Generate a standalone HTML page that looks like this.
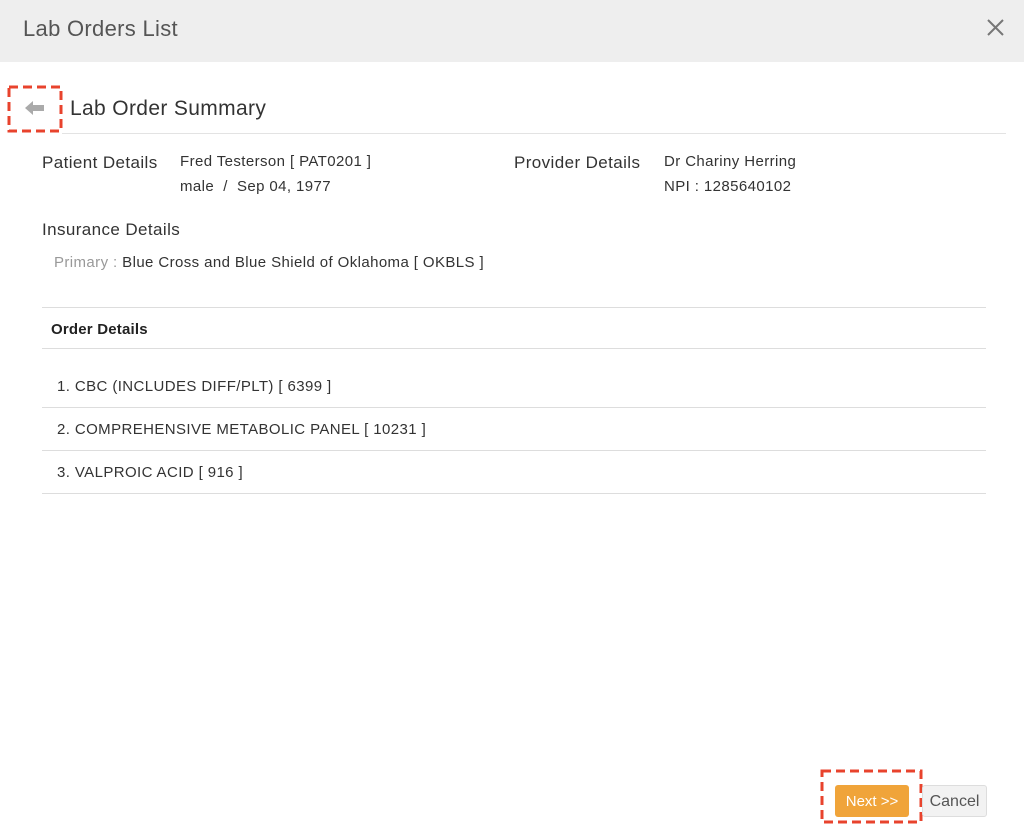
<!DOCTYPE html>
<html><head><style>
*{margin:0;padding:0;box-sizing:border-box}
body{width:1024px;height:827px;background:#fff;font-family:"Liberation Sans",sans-serif;color:#333;position:relative;overflow:hidden}
.a{position:absolute;white-space:nowrap}
.t{letter-spacing:0.4px}
.hl{position:absolute;left:42px;width:944px;height:1px;background:#ddd}
</style></head><body>
<div class="a" style="left:0;top:0;width:1024px;height:62px;background:#eeeeee"></div>
<div class="a" style="left:23px;top:16px;font-size:22px;color:#555;letter-spacing:0.3px">Lab Orders List</div>
<svg class="a" style="left:987px;top:19px" width="17" height="17" viewBox="0 0 17 17"><path d="M1 1L16 16M16 1L1 16" stroke="#777" stroke-width="2"/></svg>
<svg class="a" style="left:7px;top:85px" width="56" height="48"><rect x="2" y="2" width="52" height="44" fill="none" stroke="#e8432d" stroke-width="3" stroke-dasharray="9 5"/></svg>
<svg class="a" style="left:24px;top:100px" width="22" height="16" viewBox="0 0 22 16"><path d="M1 8L9 1V5H20V11H9V15Z" fill="#aaa"/></svg>
<div class="a" style="left:70px;top:97px;font-size:21px;color:#333;letter-spacing:0.35px">Lab Order Summary</div>
<div class="a" style="left:62px;top:133px;width:944px;height:1px;background:#e3e3e3"></div>
<div class="a t" style="left:42px;top:153px;font-size:17px">Patient Details</div>
<div class="a t" style="left:180px;top:149px;font-size:15px;line-height:25px">Fred Testerson [ PAT0201 ]<br>male &nbsp;/ &nbsp;Sep 04, 1977</div>
<div class="a t" style="left:514px;top:153px;font-size:17px">Provider Details</div>
<div class="a t" style="left:664px;top:149px;font-size:15px;line-height:25px">Dr Chariny Herring<br>NPI : 1285640102</div>
<div class="a t" style="left:42px;top:220px;font-size:17px">Insurance Details</div>
<div class="a t" style="left:54px;top:254px;font-size:15px"><span style="color:#999">Primary :</span> Blue Cross and Blue Shield of Oklahoma [ OKBLS ]</div>
<div class="hl" style="top:307px"></div>
<div class="a" style="left:51px;top:321px;font-size:15px;font-weight:bold;color:#222;letter-spacing:0.2px">Order Details</div>
<div class="hl" style="top:348px"></div>
<div class="a t" style="left:57px;top:378px;font-size:15px">1. CBC (INCLUDES DIFF/PLT) [ 6399 ]</div>
<div class="hl" style="top:407px"></div>
<div class="a t" style="left:57px;top:421px;font-size:15px">2. COMPREHENSIVE METABOLIC PANEL [ 10231 ]</div>
<div class="hl" style="top:450px"></div>
<div class="a t" style="left:57px;top:464px;font-size:15px">3. VALPROIC ACID [ 916 ]</div>
<div class="hl" style="top:493px"></div>
<svg class="a" style="left:820px;top:769px" width="103" height="55"><rect x="2" y="2" width="99" height="51" fill="none" stroke="#e8432d" stroke-width="3" stroke-dasharray="9 5"/></svg>
<div class="a" style="left:835px;top:785px;width:74px;height:32px;background:#f0a43a;border-radius:3px;color:#fff;font-size:15px;text-align:center;line-height:34px">Next &gt;&gt;</div>
<div class="a" style="left:922px;top:785px;width:65px;height:32px;background:#f2f2f2;border:1px solid #ddd;border-radius:3px;color:#555;font-size:16px;text-align:center;line-height:32px">Cancel</div>
</body></html>
